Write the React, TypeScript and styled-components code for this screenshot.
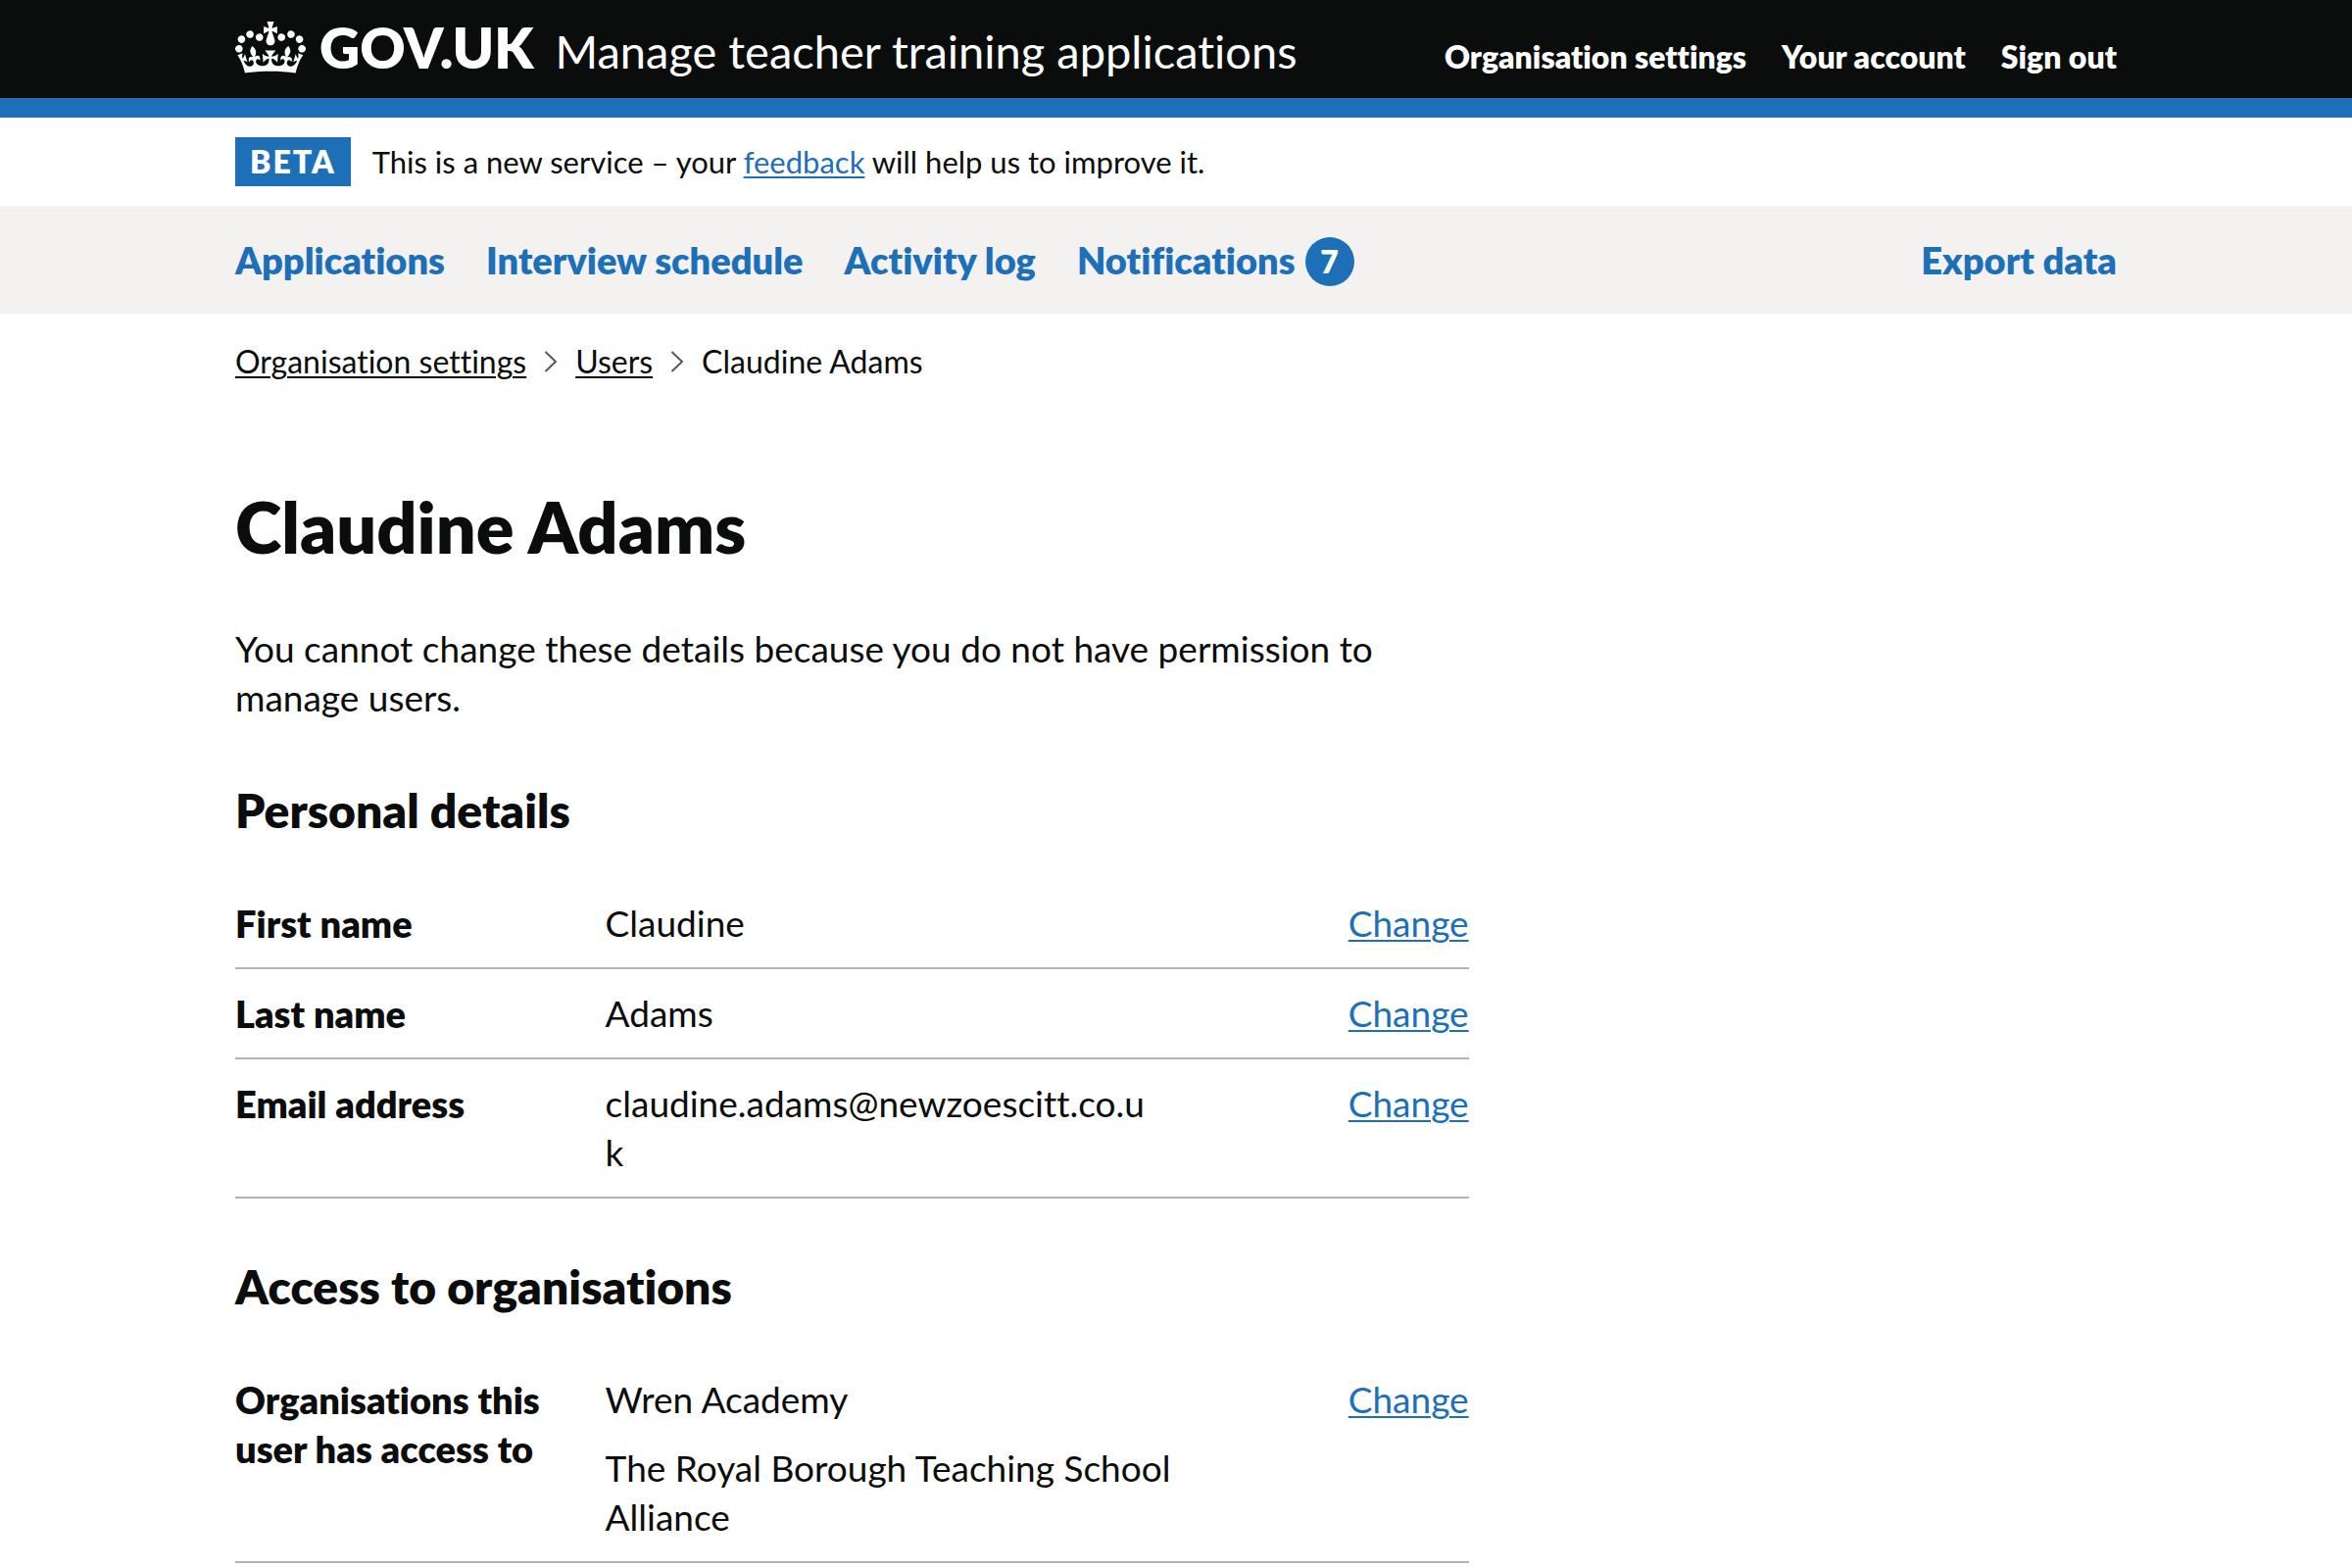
import React from "react";
import styled, { createGlobalStyle, css } from "styled-components";

const colour = {
  black: "#0b0c0c",
  blue: "#1d70b8",
  grey: "#f3f2f1",
  border: "#b1b4b6",
  secondary: "#505a5f",
  white: "#ffffff",
};

const size = { caption: 31, small: 32, body: 37, strong: 38, service: 47, medium: 48, logo: 57, large: 72 };

const bold = 800;

const GlobalStyle = createGlobalStyle`
  *, *::before, *::after { box-sizing: border-box; }
  body {
    margin: 0;
    background: ${colour.white};
    color: ${colour.black};
    font-family: Lato, "Liberation Sans", Arial, sans-serif;
    font-size: ${size.body}px;
    font-variant-ligatures: none;
    line-height: 50px;
  }
  h1, h2, p, dl, dd, ul, ol { margin: 0; padding: 0; }
  ul, ol { list-style: none; }
`;

const Container = styled.div`
  max-width: 1920px;
  margin: 0 auto;

  @media (max-width: 1980px) {
    margin: 0 30px;
  }
`;

const Header = styled.header`
  background: ${colour.black};
  border-bottom: 20px solid ${colour.blue};
`;

const HeaderRow = styled(Container)`
  display: flex;
  flex-wrap: wrap;
  align-items: baseline;
  justify-content: space-between;
  padding: 8px 0 12px;
`;

const Brand = styled.div`
  display: flex;
  flex-wrap: wrap;
  align-items: baseline;
  gap: 22px;
`;

const headerLink = css`
  color: ${colour.white};
  text-decoration: none;

  &:hover {
    text-decoration: underline;
    text-underline-offset: 6px;
  }
`;

const LogoLink = styled.a`
  ${headerLink}
  display: flex;
  align-items: baseline;
  gap: 14px;
  font-size: ${size.logo}px;
  font-weight: ${bold};
  line-height: 80px;
`;

const Crown = styled.svg`
  align-self: center;
  width: 72px;
  height: 53px;
  fill: currentColor;
`;

const ServiceLink = styled.a`
  ${headerLink}
  font-size: ${size.service}px;
  line-height: 60px;
`;

const HeaderLinks = styled.ul`
  display: flex;
  flex-wrap: wrap;
  gap: 36px;
  font-size: ${size.small}px;
  font-weight: ${bold};
  line-height: 40px;
`;

const HeaderLink = styled.a`
  ${headerLink}
`;

const link = css`
  color: ${colour.blue};
  text-decoration: underline;
  text-decoration-thickness: 2px;
  text-underline-offset: 3px;
`;

const PhaseBanner = styled(Container)`
  display: flex;
  align-items: center;
  gap: 22px;
  padding: 20px 0;
`;

const PhaseTag = styled.strong`
  padding: 5px 15px;
  background: ${colour.blue};
  color: ${colour.white};
  font-size: ${size.small}px;
  font-weight: ${bold};
  line-height: 40px;
  letter-spacing: 2px;
`;

const PhaseText = styled.p`
  font-size: ${size.caption}px;
  line-height: 40px;
`;

const TextLink = styled.a`
  ${link}
`;

const PrimaryNav = styled.nav`
  background: ${colour.grey};
`;

const PrimaryRow = styled(Container)`
  display: flex;
  flex-wrap: wrap;
  justify-content: space-between;
  padding: 30px 0;
`;

const PrimaryList = styled.ul`
  display: flex;
  flex-wrap: wrap;
  gap: 42px;
`;

const PrimaryLink = styled.a`
  display: flex;
  align-items: center;
  gap: 10px;
  color: ${colour.blue};
  font-size: ${size.strong}px;
  font-weight: ${bold};
  text-decoration: none;
`;

const Badge = styled.span`
  min-width: 50px;
  border-radius: 25px;
  margin: 2px 0 -2px;
  background: ${colour.blue};
  color: ${colour.white};
  font-size: ${size.small}px;
  line-height: 50px;
  text-align: center;
`;

const Breadcrumbs = styled.ol`
  display: flex;
  flex-wrap: wrap;
  align-items: center;
  gap: 18px;
  padding-top: 29px;
  font-size: ${size.small}px;
  line-height: 40px;
`;

const Crumb = styled.li`
  display: flex;
  align-items: center;
  gap: 18px;
`;

const CrumbLink = styled.a`
  ${link}
  color: ${colour.black};
`;

const Chevron = styled.svg`
  width: 14px;
  height: 22px;
  fill: none;
  stroke: ${colour.secondary};
  stroke-width: 2;
`;

const Main = styled.main`
  display: grid;
  grid-template-columns: minmax(0, 2fr) minmax(0, 1fr);
  gap: 32px;
  padding: 108px 0 80px;
`;

const Title = styled.h1`
  margin-bottom: 60px;
  font-size: ${size.large}px;
  font-weight: ${bold};
  line-height: 80px;
`;

const Lead = styled.p`
  margin-bottom: 60px;
`;

const SectionTitle = styled.h2`
  margin-bottom: 40px;
  font-size: ${size.medium}px;
  font-weight: ${bold};
  line-height: 60px;
`;

const SummaryList = styled.dl`
  margin-bottom: 60px;
`;

const SummaryRow = styled.div`
  display: grid;
  grid-template-columns: 30% 50% 20%;
  padding: 20px 0;
  border-bottom: 2px solid ${colour.border};
`;

const Key = styled.dt`
  padding-right: 40px;
  font-size: ${size.strong}px;
  font-weight: ${bold};
`;

const Value = styled.dd<{ $inset: number }>`
  display: grid;
  gap: 20px;
  padding-right: ${({ $inset }) => $inset}px;
  overflow-wrap: anywhere;
`;

const Actions = styled.dd`
  text-align: right;
`;

type Item = { label: string; values: string[]; inset?: number };

const personal: Item[] = [
  { label: "First name", values: ["Claudine"] },
  { label: "Last name", values: ["Adams"] },
  { label: "Email address", values: ["claudine.adams@newzoescitt.co.uk"], inset: 70 },
];

const access: Item[] = [
  {
    label: "Organisations this user has access to",
    values: ["Wren Academy", "The Royal Borough Teaching School Alliance"],
  },
];

const Summary = ({ items }: { items: Item[] }) => (
  <SummaryList>
    {items.map((item) => (
      <SummaryRow key={item.label}>
        <Key>{item.label}</Key>
        <Value $inset={item.inset ?? 40}>
          {item.values.map((value) => (
            <p key={value}>{value}</p>
          ))}
        </Value>
        <Actions>
          <TextLink href="#">Change</TextLink>
        </Actions>
      </SummaryRow>
    ))}
  </SummaryList>
);

const Separator = () => (
  <Chevron viewBox="0 0 14 22" aria-hidden="true">
    <path d="M1.5 1 12 11 1.5 21" />
  </Chevron>
);

export default function App() {
  return (
    <>
      <GlobalStyle />
      <Header>
        <HeaderRow>
          <Brand>
            <LogoLink href="#">
              <Crown viewBox="0 0 132 97" aria-hidden="true">
                <path
                  fillRule="evenodd"
                  d="M25 30.2c3.5 1.5 7.7-.2 9.1-3.7 1.5-3.6-.2-7.8-3.9-9.2-3.6-1.4-7.6.3-9.1 3.9-1.4 3.5.3 7.5 3.9 9zM9 39.5c3.6 1.5 7.8-.2 9.2-3.7 1.5-3.6-.2-7.8-3.9-9.1-3.6-1.5-7.6.2-9.1 3.8-1.4 3.5.3 7.5 3.8 9zM4.4 57.2c3.5 1.5 7.7-.2 9.1-3.8 1.5-3.6-.2-7.7-3.9-9.1-3.5-1.5-7.6.3-9.1 3.8-1.4 3.5.3 7.6 3.9 9.1zm38.3-21.4c3.5 1.5 7.7-.2 9.1-3.8 1.5-3.6-.2-7.7-3.9-9.1-3.6-1.5-7.6.3-9.1 3.8-1.3 3.6.4 7.7 3.9 9.1zm64.4-5.6c-3.6 1.5-7.8-.2-9.1-3.7-1.5-3.6.2-7.8 3.8-9.2 3.6-1.4 7.7.3 9.2 3.9 1.3 3.5-.4 7.5-3.9 9zm15.9 9.3c-3.6 1.5-7.7-.2-9.1-3.7-1.5-3.6.2-7.8 3.7-9.1 3.6-1.5 7.7.2 9.2 3.8 1.5 3.5-.3 7.5-3.8 9zm4.7 17.7c-3.6 1.5-7.8-.2-9.2-3.8-1.5-3.6.2-7.7 3.9-9.1 3.6-1.5 7.7.3 9.2 3.8 1.3 3.5-.4 7.6-3.9 9.1zM89.3 35.8c-3.6 1.5-7.8-.2-9.2-3.8-1.4-3.6.2-7.7 3.9-9.1 3.6-1.5 7.7.3 9.2 3.8 1.4 3.6-.3 7.7-3.9 9.1zM69.7 17.7l8.9 4.7V9.3l-8.9 2.8c-.2-.3-.5-.6-.9-.9L72.4 0H59.6l3.5 11.2c-.3.3-.6.5-.9.9l-8.8-2.8v13.1l8.8-4.7c.3.3.6.7.9.9l-5 15.4v.1c-.2.8-.4 1.6-.4 2.4 0 4.1 3.1 7.5 7 8.1h.2c.3 0 .7.1 1 .1.4 0 .7 0 1-.1h.2c4-.6 7.1-4.1 7.1-8.1 0-.8-.1-1.7-.4-2.4V34l-5.1-15.4c.4-.2.7-.6 1-.9zM66 92.8c16.9 0 32.8 1.1 47.1 3.2 4-16.9 8.9-26.7 14-33.5l-9.6-3.4c1 4.9 1.1 7.2 0 10.2-1.5-1.4-3-4.3-4.2-8.7L108.6 76c2.8-2 5-3.2 7.5-3.3-4.4 9.4-10 11.9-13.6 11.2-4.3-.8-6.3-4.6-5.6-7.9 1-4.7 5.7-5.9 8-.5 4.3-8.7-3-11.4-7.6-8.8 7.1-7.2 7.9-13.5 2.1-21.1-8 6.1-8.1 12.3-4.5 20.8-4.7-5.4-12.1-2.5-9.5 6.2 3.4-5.2 7.9-2 7.2 3.1-.6 4.3-6.4 7.8-13.5 7.2-10.3-.9-10.9-8-11.2-13.8 2.5-.5 7.1 1.8 11 7.3L80.2 60c-4.1 4.4-8 5.3-12.3 5.4 1.4-4.4 8-11.6 8-11.6H55.5s6.4 7.2 7.9 11.6c-4.2-.1-8-1-12.3-5.4l1.4 16.4c3.9-5.5 8.5-7.7 10.9-7.3-.3 5.8-.9 12.8-11.1 13.8-7.2.6-12.9-2.9-13.5-7.2-.7-5 3.8-8.3 7.1-3.1 2.7-8.7-4.6-11.6-9.4-6.2 3.7-8.5 3.6-14.7-4.6-20.8-5.8 7.6-5 13.9 2.2 21.1-4.7-2.6-11.9.1-7.7 8.8 2.3-5.5 7.1-4.2 8.1.5.7 3.3-1.3 7.1-5.7 7.9-3.5.7-9-1.8-13.5-11.2 2.5.1 4.7 1.3 7.5 3.3l-4.7-15.4c-1.2 4.4-2.7 7.2-4.3 8.7-1.1-3-.9-5.3 0-10.2l-9.5 3.4c5 6.9 9.9 16.7 14 33.5 14.8-2.1 30.8-3.2 47.7-3.2z"
                />
              </Crown>
              <span>GOV.UK</span>
            </LogoLink>
            <ServiceLink href="#">Manage teacher training applications</ServiceLink>
          </Brand>
          <nav aria-label="Account">
            <HeaderLinks>
              {["Organisation settings", "Your account", "Sign out"].map((text) => (
                <li key={text}>
                  <HeaderLink href="#">{text}</HeaderLink>
                </li>
              ))}
            </HeaderLinks>
          </nav>
        </HeaderRow>
      </Header>

      <PhaseBanner>
        <PhaseTag>BETA</PhaseTag>
        <PhaseText>
          This is a new service – your <TextLink href="#">feedback</TextLink> will help us to improve it.
        </PhaseText>
      </PhaseBanner>

      <PrimaryNav aria-label="Primary">
        <PrimaryRow>
          <PrimaryList>
            {["Applications", "Interview schedule", "Activity log"].map((text) => (
              <li key={text}>
                <PrimaryLink href="#">{text}</PrimaryLink>
              </li>
            ))}
            <li>
              <PrimaryLink href="#">
                Notifications <Badge>7</Badge>
              </PrimaryLink>
            </li>
          </PrimaryList>
          <PrimaryLink href="#">Export data</PrimaryLink>
        </PrimaryRow>
      </PrimaryNav>

      <Container>
        <nav aria-label="Breadcrumb">
          <Breadcrumbs>
            <Crumb>
              <CrumbLink href="#">Organisation settings</CrumbLink>
            </Crumb>
            <Crumb>
              <Separator />
              <CrumbLink href="#">Users</CrumbLink>
            </Crumb>
            <Crumb aria-current="page">
              <Separator />
              Claudine Adams
            </Crumb>
          </Breadcrumbs>
        </nav>

        <Main>
          <div>
            <Title>Claudine Adams</Title>
            <Lead>You cannot change these details because you do not have permission to manage users.</Lead>
            <SectionTitle>Personal details</SectionTitle>
            <Summary items={personal} />
            <SectionTitle>Access to organisations</SectionTitle>
            <Summary items={access} />
          </div>
        </Main>
      </Container>
    </>
  );
}
